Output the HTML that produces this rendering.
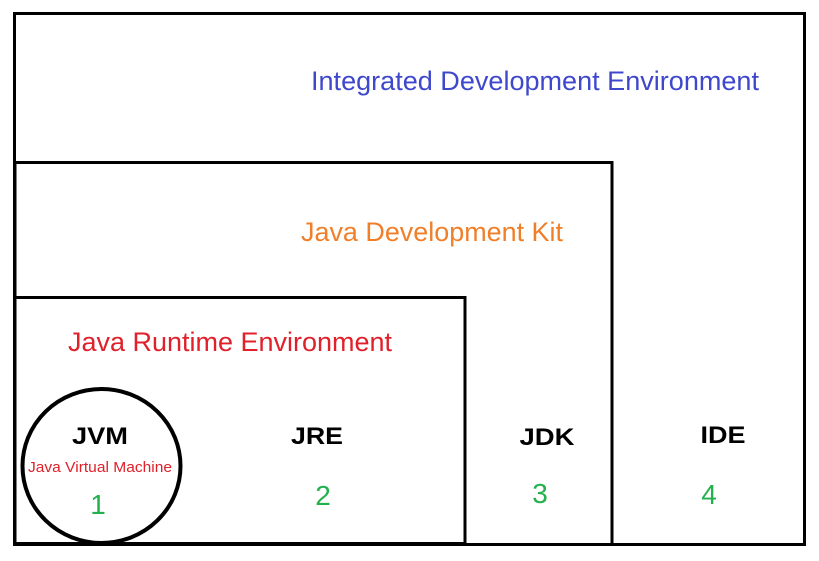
<!DOCTYPE html>
<html><head><meta charset="utf-8"><style>html,body{margin:0;padding:0;background:#fff}svg{display:block}</style></head>
<body>
<svg width="819" height="561" viewBox="0 0 819 561" xmlns="http://www.w3.org/2000/svg" font-family="Liberation Sans, Arial, sans-serif">
<rect x="0" y="0" width="819" height="561" fill="#fff"/>
<rect x="14.5" y="13.5" width="790" height="531" fill="none" stroke="#000" stroke-width="3"/>
<rect x="15" y="162.5" width="597" height="382" fill="none" stroke="#000" stroke-width="3"/>
<rect x="15" y="297.5" width="450" height="246" fill="none" stroke="#000" stroke-width="3"/>
<ellipse cx="101.5" cy="466" rx="79" ry="77" fill="none" stroke="#000" stroke-width="4"/>
<text x="311" y="90" font-size="27" fill="#3f48cc" textLength="448" lengthAdjust="spacingAndGlyphs">Integrated Development Environment</text>
<text x="301" y="241" font-size="27" fill="#f07f2a" textLength="262" lengthAdjust="spacingAndGlyphs">Java Development Kit</text>
<text x="68" y="351" font-size="27" fill="#e0202a" textLength="324" lengthAdjust="spacingAndGlyphs">Java Runtime Environment</text>
<text x="100" y="444" font-size="24" font-weight="bold" text-anchor="middle" fill="#000" textLength="56" lengthAdjust="spacingAndGlyphs">JVM</text>
<text x="100" y="472" font-size="15" text-anchor="middle" fill="#e0202a" textLength="144" lengthAdjust="spacingAndGlyphs">Java Virtual Machine</text>
<text x="98" y="514" font-size="28" text-anchor="middle" fill="#22b14c">1</text>
<text x="317" y="444" font-size="24" font-weight="bold" text-anchor="middle" fill="#000" textLength="52" lengthAdjust="spacingAndGlyphs">JRE</text>
<text x="323" y="505" font-size="28" text-anchor="middle" fill="#22b14c">2</text>
<text x="547" y="445" font-size="24" font-weight="bold" text-anchor="middle" fill="#000" textLength="55" lengthAdjust="spacingAndGlyphs">JDK</text>
<text x="540" y="503" font-size="28" text-anchor="middle" fill="#22b14c">3</text>
<text x="723" y="443" font-size="24" font-weight="bold" text-anchor="middle" fill="#000" textLength="45" lengthAdjust="spacingAndGlyphs">IDE</text>
<text x="709" y="504" font-size="28" text-anchor="middle" fill="#22b14c">4</text>
</svg>
</body></html>
